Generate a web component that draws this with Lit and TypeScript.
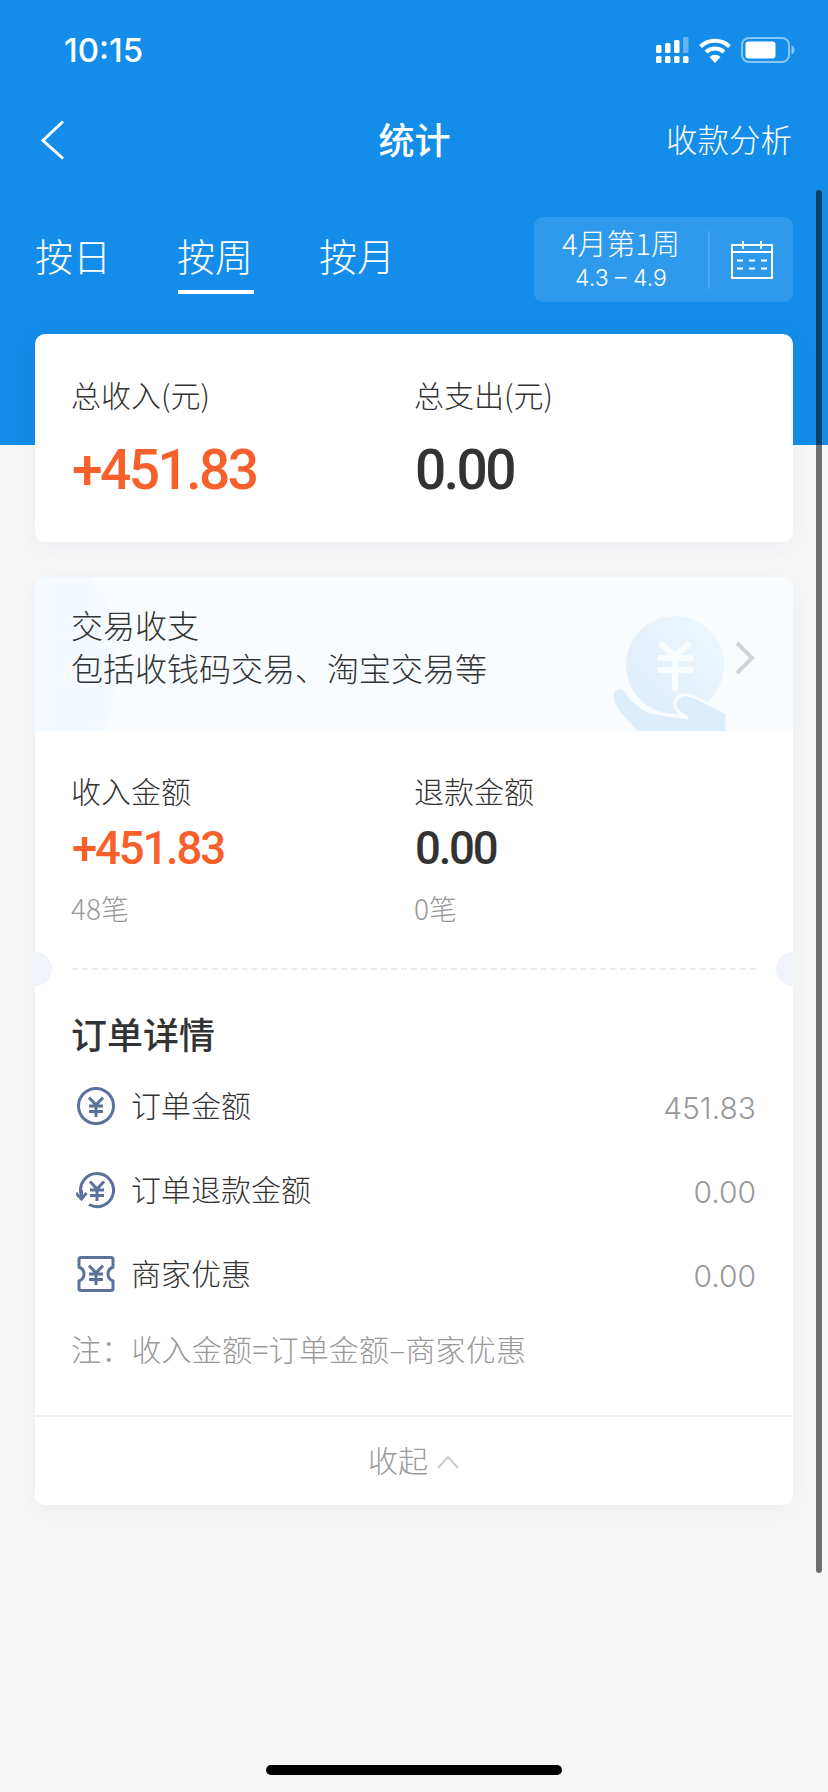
import { LitElement, html, svg, css } from 'lit';
import { customElement } from 'lit/decorators.js';

const yen = svg`<path d="M13 11.5l7 7.5 7-7.5M13 20h14M13 25.5h14M20 19v12" fill="none" stroke="#5a7299" stroke-width="3" />`;

const rows = [
  {
    label: '订单金额',
    value: '451.83',
    icon: html`<svg class="row-icon" viewBox="0 0 40 40">
      <circle cx="20" cy="20" r="17.5" fill="none" stroke="#5a7299" stroke-width="3" />
      ${yen}
    </svg>`,
  },
  {
    label: '订单退款金额',
    value: '0.00',
    icon: html`<svg class="row-icon" viewBox="0 0 40 40">
      <path d="M5 24A16.5 16.5 0 1 1 13 34.5" fill="none" stroke="#5a7299" stroke-width="3" />
      <path d="M0 23l5.5 6 5-6M5.5 20v8" fill="none" stroke="#5a7299" stroke-width="3" />
      <g transform="translate(1 0)">${yen}</g>
    </svg>`,
  },
  {
    label: '商家优惠',
    value: '0.00',
    icon: html`<svg class="row-icon" viewBox="0 0 40 40">
      <path d="M5 3.5H35Q37 3.5 37 5.5V13Q32 15 32 20Q32 25 37 27V34.5Q37 36.5 35 36.5H5Q3 36.5 3 34.5V27Q8 25 8 20Q8 15 3 13V5.5Q3 3.5 5 3.5Z" fill="none" stroke="#5a7299" stroke-width="3" />
      ${yen}
    </svg>`,
  },
];

@customElement('app-root')
export class AppRoot extends LitElement {
  static styles = css`
    :host {
      display: block;
      position: relative;
      width: 828px;
      height: 1792px;
      overflow: hidden;
      background: linear-gradient(#138de9 445px, #f7f7f8 445px);
      font-family: 'Noto Sans CJK SC', 'Liberation Sans', sans-serif;
      color: #333;
    }

    .status {
      height: 100px;
      display: flex;
      justify-content: space-between;
      align-items: center;
      padding: 0 33px 0 64px;
      box-sizing: border-box;
      color: #fff;
    }
    .time {
      font: 500 33px/1 Inter, sans-serif;
    }
    .status-icons {
      display: flex;
      align-items: center;
      gap: 10px;
    }

    .nav {
      height: 80px;
      display: grid;
      grid-template-columns: 1fr auto 1fr;
      align-items: center;
      padding: 0 36px 0 37px;
      color: #fff;
    }
    .back {
      width: 24px;
      height: 40px;
      margin-left: 3px;
    }
    .title {
      font-size: 36px;
      font-weight: 500;
      line-height: 50px;
      padding-bottom: 5px;
    }
    .nav-link {
      font-size: 31.5px;
      line-height: 44px;
      font-weight: 300;
      text-align: right;
      padding-bottom: 4px;
    }

    .range {
      display: flex;
      justify-content: space-between;
      align-items: stretch;
      margin-top: 37px;
      padding: 0 35px;
      color: #fff;
    }
    .tabs {
      display: flex;
      gap: 70px;
    }
    .tab {
      position: relative;
      width: 72px;
      padding-top: 12px;
      font-size: 38px;
      line-height: 52px;
      font-weight: 300;
      white-space: nowrap;
    }
    .tab.on::after {
      content: '';
      position: absolute;
      left: 1px;
      top: 73px;
      width: 76px;
      height: 4px;
      background: #fff;
    }
    .date {
      width: 259px;
      height: 85px;
      display: flex;
      align-items: center;
      background: rgba(255, 255, 255, 0.12);
      border-radius: 9px;
    }
    .date-text {
      width: 174px;
      padding-bottom: 4px;
      text-align: center;
    }
    .date-main {
      font-size: 29px;
      line-height: 38px;
      font-weight: 300;
    }
    .date-sub {
      margin-top: 3px;
      font: 300 23px/28px Inter, sans-serif;
    }
    .date-sep {
      width: 2px;
      height: 58px;
      background: rgba(255, 255, 255, 0.14);
    }
    .calendar {
      width: 42px;
      height: 38px;
      margin-left: 21px;
    }

    .card {
      position: relative;
      margin: 0 35px;
      background: #fff;
      border-radius: 10px;
      box-shadow: 0 6px 24px rgba(40, 50, 80, 0.05);
      overflow: hidden;
    }
    .summary {
      margin-top: 32px;
      padding: 40px 36px 42px;
    }
    .cols {
      display: grid;
      grid-template-columns: 343px 1fr;
    }
    .label {
      font-size: 30px;
      line-height: 40px;
      font-weight: 300;
    }
    .big {
      margin: 26px 0 0 1px;
      font: 500 55px/60px Roboto, sans-serif;
      letter-spacing: -2.5px;
    }
    .orange {
      color: #f7602b;
    }

    .detail {
      margin-top: 35px;
    }
    .banner {
      position: relative;
      height: 154px;
      box-sizing: border-box;
      padding: 26px 38px 0 36px;
      display: flex;
      justify-content: space-between;
      background: #f8fcff;
      overflow: hidden;
    }
    .banner-text {
      position: relative;
      font-size: 32px;
      line-height: 43px;
      font-weight: 300;
    }
    .banner-art {
      position: absolute;
      inset: 0;
      width: 758px;
      height: 154px;
    }
    .banner-arrow {
      position: relative;
      width: 20px;
      height: 34px;
      margin-top: 38px;
    }

    .income {
      padding: 39px 36px 0;
    }
    .mid {
      margin: 14px 0 0 1px;
      font: 500 45.5px/50px Roboto, sans-serif;
      letter-spacing: -2.2px;
    }
    .count {
      margin-top: 16px;
      font-size: 28px;
      line-height: 36px;
      font-weight: 300;
      color: #999;
    }

    .tear {
      position: relative;
      margin-top: 42px;
      height: 2px;
    }
    .tear-line {
      margin: 0 37px;
      border-top: 2px dashed #ececec;
    }
    .notch {
      position: absolute;
      top: -16px;
      width: 34px;
      height: 34px;
      border-radius: 50%;
      background: #f1f3fa;
    }
    .notch.left {
      left: -17px;
    }
    .notch.right {
      right: -17px;
    }

    .orders {
      padding: 38px 37px 0 36px;
    }
    .orders-title {
      font-size: 36px;
      line-height: 50px;
      font-weight: 500;
    }
    .rows {
      margin-top: 6px;
    }
    .row {
      height: 84px;
      display: flex;
      align-items: center;
      gap: 15px;
      font-size: 30px;
      font-weight: 300;
    }
    .row-icon {
      width: 40px;
      height: 40px;
      margin-left: 5px;
    }
    .row-label {
      margin-bottom: 4px;
    }
    .row-value {
      margin: 4px 0 0 auto;
      font: 300 30px/1 Inter, sans-serif;
      color: #999;
    }
    .note {
      margin-top: 12px;
      font-size: 30px;
      line-height: 40px;
      font-weight: 300;
      letter-spacing: 0.2px;
      color: #999;
    }

    .fold {
      margin-top: 47px;
      height: 90px;
      border-top: 2px solid #f1f1f1;
      display: flex;
      justify-content: center;
      align-items: center;
      gap: 8px;
      padding-bottom: 4px;
      box-sizing: border-box;
      font-size: 30px;
      font-weight: 300;
      color: #999;
    }
    .fold svg {
      width: 24px;
      height: 14px;
      margin-top: 5px;
    }

    .scrollbar {
      position: absolute;
      left: 816px;
      top: 190px;
      width: 6px;
      height: 1383px;
      border-radius: 3px;
      background: rgba(0, 0, 0, 0.55);
    }
    .home {
      position: absolute;
      left: 266px;
      top: 1765px;
      width: 296px;
      height: 10px;
      border-radius: 5px;
      background: #000;
    }
  `;

  render() {
    return html`
      <div class="status">
        <span class="time">10:15</span>
        <div class="status-icons">
          <svg width="33" height="27" viewBox="0 0 33 27" fill="#fff">
            <rect x="0" y="8" width="5.500" height="8" rx="1.500" />
            <rect x="9" y="6" width="5.500" height="10" rx="1.500" />
            <rect x="18" y="3" width="5.500" height="13" rx="1.500" />
            <rect x="27" y="0" width="5.500" height="16" rx="1.500" opacity="0.35" />
            <rect x="0" y="19" width="5.500" height="7" rx="1.500" />
            <rect x="9" y="19" width="5.500" height="7" rx="1.500" />
            <rect x="18" y="19" width="5.500" height="7" rx="1.500" />
            <rect x="27" y="19" width="5.500" height="7" rx="1.500" />
          </svg>
          <svg width="32" height="25" viewBox="0 0 32 25" fill="none" stroke="#fff" stroke-width="4">
            <path d="M1.5 8.5a21 21 0 0 1 29 0" />
            <path d="M7 14a13 13 0 0 1 18 0" />
            <path d="M16 25l-5.500-6a8 8 0 0 1 11 0z" fill="#fff" stroke="none" />
          </svg>
          <svg width="54" height="26" viewBox="0 0 54 26">
            <rect x="1" y="1" width="47" height="24" rx="7" fill="none" stroke="#fff" stroke-opacity="0.5" stroke-width="2" />
            <rect x="4.500" y="4.500" width="30" height="17" rx="3" fill="#fff" />
            <path d="M50.500 8.500c2 .5 3 2.500 3 4.500s-1 4-3 4.500z" fill="#fff" fill-opacity="0.5" />
          </svg>
        </div>
      </div>

      <div class="nav">
        <svg class="back" viewBox="0 0 24 40" fill="none" stroke="#fff" stroke-width="3">
          <path d="M23 1.500L3 20.500l20 18" />
        </svg>
        <div class="title">统计</div>
        <div class="nav-link">收款分析</div>
      </div>

      <div class="range">
        <div class="tabs">
          <div class="tab">按日</div>
          <div class="tab on">按周</div>
          <div class="tab">按月</div>
        </div>
        <div class="date">
          <div class="date-text">
            <div class="date-main">4月第1周</div>
            <div class="date-sub">4.3 – 4.9</div>
          </div>
          <div class="date-sep"></div>
          <svg class="calendar" viewBox="0 0 42 38" fill="none" stroke="#fff" stroke-width="2">
            <rect x="1" y="4" width="40" height="33" />
            <path d="M1 11h40M12 0v8M30 0v8" />
            <path d="M6 19.500h6M18 19.500h6M30 19.500h6M6 27.500h6M18 27.500h6M30 27.500h6" />
          </svg>
        </div>
      </div>

      <div class="card summary">
        <div class="cols">
          <div>
            <div class="label">总收入(元)</div>
            <div class="big orange">+451.83</div>
          </div>
          <div>
            <div class="label">总支出(元)</div>
            <div class="big">0.00</div>
          </div>
        </div>
      </div>

      <div class="card detail">
        <div class="banner">
          <svg class="banner-art" viewBox="0 0 758 154">
            <defs>
              <linearGradient id="coin" x1="0" y1="1" x2="1" y2="0">
                <stop offset="0" stop-color="#dcedfc" />
                <stop offset="1" stop-color="#eef7fe" />
              </linearGradient>
            </defs>
            <path d="M0 0H55C88 40 90 90 70 154H0Z" fill="#f4faff" />
            <g transform="translate(525 13)">
              <circle cx="115" cy="75" r="49" fill="url(#coin)" />
              <path d="M102 55l13 11 13-11M100 68h31M100 80h31M115 66v32" fill="none" stroke="#f8fcff" stroke-width="6" stroke-linecap="round" />
              <path d="M52 105C52 98 60 95 65 100C75 115 85 122 100 124L128 128C118 122 112 118 116 110C120 104 125 104 132 106L167 123V145H80C65 130 52 118 52 105Z" fill="#dcedfc" stroke="#f8fcff" stroke-width="3" />
            </g>
          </svg>
          <div class="banner-text">
            <div>交易收支</div>
            <div>包括收钱码交易、淘宝交易等</div>
          </div>
          <svg class="banner-arrow" viewBox="0 0 20 34" fill="none" stroke="#d2d2d2" stroke-width="4">
            <path d="M2 2l15 15L2 32" />
          </svg>
        </div>

        <div class="income cols">
          <div>
            <div class="label">收入金额</div>
            <div class="mid orange">+451.83</div>
            <div class="count">48笔</div>
          </div>
          <div>
            <div class="label">退款金额</div>
            <div class="mid">0.00</div>
            <div class="count">0笔</div>
          </div>
        </div>

        <div class="tear">
          <div class="tear-line"></div>
          <div class="notch left"></div>
          <div class="notch right"></div>
        </div>

        <div class="orders">
          <div class="orders-title">订单详情</div>
          <div class="rows">
            ${rows.map(
              (row) => html`
                <div class="row">
                  ${row.icon}
                  <span class="row-label">${row.label}</span>
                  <span class="row-value">${row.value}</span>
                </div>
              `,
            )}
          </div>
          <div class="note">注：收入金额=订单金额–商家优惠</div>
        </div>

        <div class="fold">
          <span>收起</span>
          <svg viewBox="0 0 24 14" fill="none" stroke="#ccc" stroke-width="2">
            <path d="M2 13L12 2l10 11" />
          </svg>
        </div>
      </div>

      <div class="scrollbar"></div>
      <div class="home"></div>
    `;
  }
}
